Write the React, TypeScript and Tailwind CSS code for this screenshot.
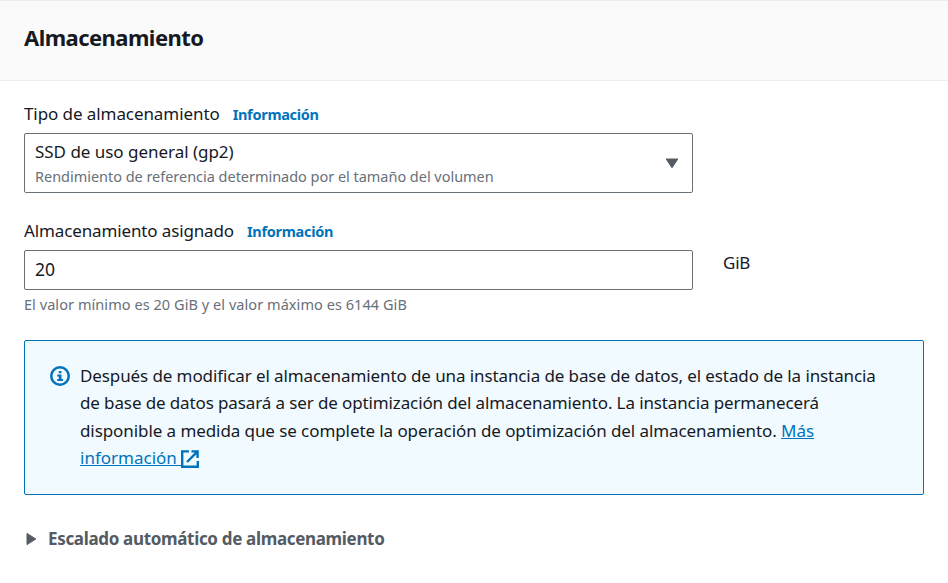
import type { ReactNode } from "react";

function InfoLink() {
  return (
    <a className="text-[14.5px] leading-5 font-bold tracking-[-0.3px] text-[#0073bb]">Información</a>
  );
}

function FieldLabel({ children }: { children: ReactNode }) {
  return (
    <div className="flex h-7 items-center gap-[13px] whitespace-nowrap">
      <span className="text-[17px]">{children}</span>
      <InfoLink />
    </div>
  );
}

function InfoIcon() {
  return (
    <svg className="mt-[1px] size-5 shrink-0" viewBox="0 0 20 20" fill="none">
      <circle cx="10" cy="10" r="8.75" stroke="#0073bb" strokeWidth="2.5" />
      <path d="M8.8 5h2.7v2.3H8.8zM7.2 8.4h4.3v4.5h1.5V15H7.2v-2.1h1.6v-2.4H7.2z" fill="#0073bb" />
    </svg>
  );
}

function ExternalIcon() {
  return (
    <svg className="inline-block size-[18px] align-[-4px]" viewBox="0 0 18 18" fill="none" stroke="#0073bb" strokeWidth="2.4">
      <path d="M8 1.4H1.2V16.8H16.8V11M10.5 1.4H16.6V8M16.4 1.6L6 12" />
    </svg>
  );
}

export default function App() {
  return (
    <main className="h-[583px] w-[948px] overflow-hidden bg-white font-['Noto_Sans','Open_Sans',sans-serif] text-[#16191f]">
      <header className="flex h-[81px] items-center border-y border-[#eaeded] bg-[#fafafa] px-6 pb-2">
        <h2 className="text-[22px] leading-7 font-bold tracking-[-0.55px]">Almacenamiento</h2>
      </header>

      <section className="px-6 pt-[19px]">
        <FieldLabel>
          <span className="tracking-[-0.08px]">Tipo de almacenamiento</span>
        </FieldLabel>
        <div className="mt-[5px] flex h-[60px] w-[669px] items-center justify-between rounded-[2px] border border-[#687078] pr-[13px] pl-[10px] whitespace-nowrap">
          <div>
            <div className="text-[17px] leading-[27px] tracking-[-0.03px]">SSD de uso general (gp2)</div>
            <div className="text-[14.5px] leading-[23px] tracking-[-0.03px] text-[#687078]">
              Rendimiento de referencia determinado por el tamaño del volumen
            </div>
          </div>
          <svg className="h-[11px] w-[14px]" viewBox="0 0 14 11" fill="#545b64" stroke="#545b64" strokeLinejoin="round">
            <path d="M1.2 1H12.8L7 9.8z" />
          </svg>
        </div>

        <div className="mt-6 flex gap-[30px]">
          <div className="w-[669px]">
            <FieldLabel>
              <span className="tracking-[-0.13px]">Almacenamiento asignado</span>
            </FieldLabel>
            <div className="mt-[5px] flex h-10 items-center rounded-[2px] border border-[#687078] px-[10px] pb-0.5 text-[17.5px]">20</div>
            <div className="mt-[3px] text-[14.5px] leading-[23px] tracking-[0.06px] whitespace-nowrap text-[#687078]">
              El valor mínimo es 20 GiB y el valor máximo es 6144 GiB
            </div>
          </div>
          <span className="pt-8 text-[17px] leading-7 tracking-[-0.2px]">GiB</span>
        </div>

        <div className="mt-6 flex h-[155px] w-[900px] gap-[10px] rounded-[2px] border border-[#0073bb] bg-[#f1faff] pt-6 pl-[25px]">
          <InfoIcon />
          <p className="-mt-[3.4px] text-[17px] leading-[27.5px] tracking-[-0.1px] whitespace-nowrap">
            <span className="block">Después de modificar el almacenamiento de una instancia de base de datos, el estado de la instancia</span>
            <span className="block tracking-[-0.12px]">de base de datos pasará a ser de optimización del almacenamiento. La instancia permanecerá</span>
            <span className="block tracking-[-0.08px]">
              disponible a medida que se complete la operación de optimización del almacenamiento.{" "}
              <a className="text-[#0073bb] underline">Más</a>
            </span>
            <a className="block text-[#0073bb]">
              <span className="tracking-normal whitespace-pre underline">información </span>
              <ExternalIcon />
            </a>
          </p>
        </div>

        <div className="mt-[30px] flex h-7 items-center gap-[11px] pl-[2px] whitespace-nowrap">
          <svg className="h-[14px] w-[11px]" viewBox="0 0 11 14" fill="#545b64" stroke="#545b64" strokeLinejoin="round">
            <path d="M1 1.4V12.6L9.8 7z" />
          </svg>
          <span className="text-[17px] font-bold tracking-[-0.33px] text-[#545b64]">Escalado automático de almacenamiento</span>
        </div>
      </section>
    </main>
  );
}
